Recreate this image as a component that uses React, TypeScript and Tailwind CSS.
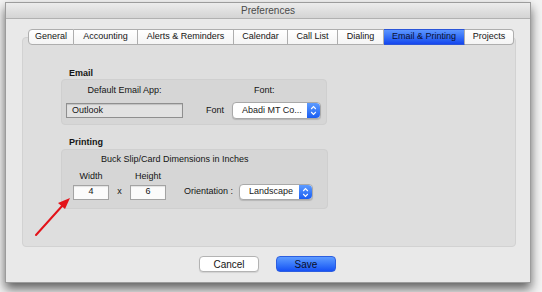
import React from "react";

const tabs: { label: string; w: number; active?: boolean }[] = [
  { label: "General", w: 46 },
  { label: "Accounting", w: 64 },
  { label: "Alerts & Reminders", w: 96 },
  { label: "Calendar", w: 54 },
  { label: "Call List", w: 50 },
  { label: "Dialing", w: 46 },
  { label: "Email & Printing", w: 81, active: true },
  { label: "Projects", w: 49 },
];

function Stepper() {
  return (
    <div className="flex h-full w-[13px] items-center justify-center rounded-r-[4px] bg-gradient-to-b from-[#5d9bff] to-[#1a5cf2]">
      <svg width="7" height="11" viewBox="0 0 7 11">
        <path d="M1.2 4 L3.5 1.6 L5.8 4" fill="none" stroke="#fff" strokeWidth="1.1" />
        <path d="M1.2 7 L3.5 9.4 L5.8 7" fill="none" stroke="#fff" strokeWidth="1.1" />
      </svg>
    </div>
  );
}

function Select({ text, w, h }: { text: string; w: number; h: number }) {
  return (
    <div
      className="flex items-stretch rounded-[4px] border border-[#a9a9a9] bg-white shadow-[0_1px_1px_rgba(0,0,0,0.15)]"
      style={{ width: w, height: h }}
    >
      <div className="flex flex-1 items-center pl-[9px] text-[9px] text-[#1a1a1a]">{text}</div>
      <Stepper />
    </div>
  );
}

export default function App() {
  return (
    <div className="relative h-[292px] w-[542px] overflow-hidden bg-[#f3f3f3] pl-[5px] pt-[2px] font-['Liberation_Sans',Arial,sans-serif] text-[#141414]">
      <div className="flex h-[281px] w-[526px] flex-col border border-[#9c9c9c] bg-[#e9e9e9] shadow-[0_6px_10px_rgba(0,0,0,0.6)]">
        {/* title bar */}
        <div className="flex h-[16px] items-center justify-center border-b border-[#b1b1b1] bg-gradient-to-b from-[#ececec] to-[#d4d4d4] text-[10px] text-[#4a4a4a]">
          Preferences
        </div>
        {/* body */}
        <div className="flex flex-1 flex-col pl-[16px] pt-[10px]">
          <div className="flex w-[494px] flex-col">
            <div className="relative z-10 flex h-[16px] pl-[6px]">
              {tabs.map((t, i) => (
                <div
                  key={t.label}
                  style={{ width: t.w }}
                  className={
                    "flex h-[16px] items-center justify-center border-y border-[#aeaeae] text-[9px] " +
                    (i === 0 ? "rounded-l-[4px] border-l " : "") +
                    (i === tabs.length - 1 ? "rounded-r-[4px] border-r " : "border-r ") +
                    (t.active
                      ? "border-y-[#2a55d8] bg-gradient-to-b from-[#5c95ff] to-[#1645ee] text-[#0b1030]"
                      : "bg-gradient-to-b from-white to-[#f4f4f4] text-[#141414]")
                  }
                >
                  {t.label}
                </div>
              ))}
            </div>
            <div className="-mt-[8px] h-[210px] rounded-[4px] border border-[#d2d2d2] bg-[#dedede] pl-[38px] pt-[30px]">
              {/* Email */}
              <div className="pl-[8px] text-[9px] font-bold leading-[11px]">Email</div>
              <div className="h-[46px] w-[266px] rounded-[4px] border border-[#cfcfcf] bg-[#d6d6d6] pl-[4px] pt-[5px]">
                <div className="flex h-[11px] items-center text-[9px]">
                  <div className="w-[117px] text-center">Default Email App:</div>
                  <div className="ml-[71px]">Font:</div>
                </div>
                <div className="mt-[6px] flex items-center">
                  <div className="flex h-[15px] w-[117px] items-center border border-[#8f8f8f] bg-[#e2e2e2] pl-[5px] text-[9px] shadow-[inset_0_1px_1px_rgba(0,0,0,0.15)]">
                    Outlook
                  </div>
                  <div className="ml-[23px] text-[9px]">Font</div>
                  <div className="ml-[8px]">
                    <Select text="Abadi MT Co..." w={89} h={17} />
                  </div>
                </div>
              </div>
              {/* Printing */}
              <div className="mt-[12px] pl-[8px] text-[9px] font-bold leading-[11px]">Printing</div>
              <div className="mt-[1px] h-[60px] w-[267px] rounded-[4px] border border-[#cfcfcf] bg-[#d6d6d6] pl-[11px] pt-[4px]">
                <div className="pl-[28px] text-[9px] leading-[11px]">Buck Slip/Card Dimensions in Inches</div>
                <div className="mt-[6px] flex text-[9px] leading-[11px]">
                  <div className="w-[36px] text-center">Width</div>
                  <div className="ml-[21px] w-[36px] text-center">Height</div>
                </div>
                <div className="mt-[2px] flex items-center text-[9px]">
                  <div className="flex h-[15px] w-[36px] items-center justify-center border border-[#a3a3a3] bg-[#fbfbfb] shadow-[inset_0_1px_1px_rgba(0,0,0,0.1)]">
                    4
                  </div>
                  <div className="w-[21px] text-center">x</div>
                  <div className="flex h-[15px] w-[36px] items-center justify-center border border-[#a3a3a3] bg-[#fbfbfb] shadow-[inset_0_1px_1px_rgba(0,0,0,0.1)]">
                    6
                  </div>
                  <div className="ml-[18px]">Orientation :</div>
                  <div className="ml-[6px]">
                    <Select text="Landscape" w={74} h={16} />
                  </div>
                </div>
              </div>
            </div>
          </div>
          {/* buttons */}
          <div className="mt-[9px] flex pl-[177px]">
            <div className="flex h-[16px] w-[60px] items-center justify-center rounded-[4px] border border-[#b3b3b3] bg-white text-[10px] shadow-[0_1px_1px_rgba(0,0,0,0.1)]">
              Cancel
            </div>
            <div className="ml-[17px] flex h-[16px] w-[60px] items-center justify-center rounded-[4px] border border-[#2c5ee0] bg-gradient-to-b from-[#5e9bff] to-[#1750f4] text-[10px] text-[#0a0f2a]">
              Save
            </div>
          </div>
        </div>
      </div>
      {/* red annotation arrow */}
      <svg className="absolute left-0 top-0" width="542" height="292" viewBox="0 0 542 292">
        <line x1="36" y1="235" x2="63" y2="205" stroke="#e3131a" strokeWidth="2" strokeLinecap="round" />
        <polygon points="70,198 58,203 65,209" fill="#e3131a" />
      </svg>
    </div>
  );
}
